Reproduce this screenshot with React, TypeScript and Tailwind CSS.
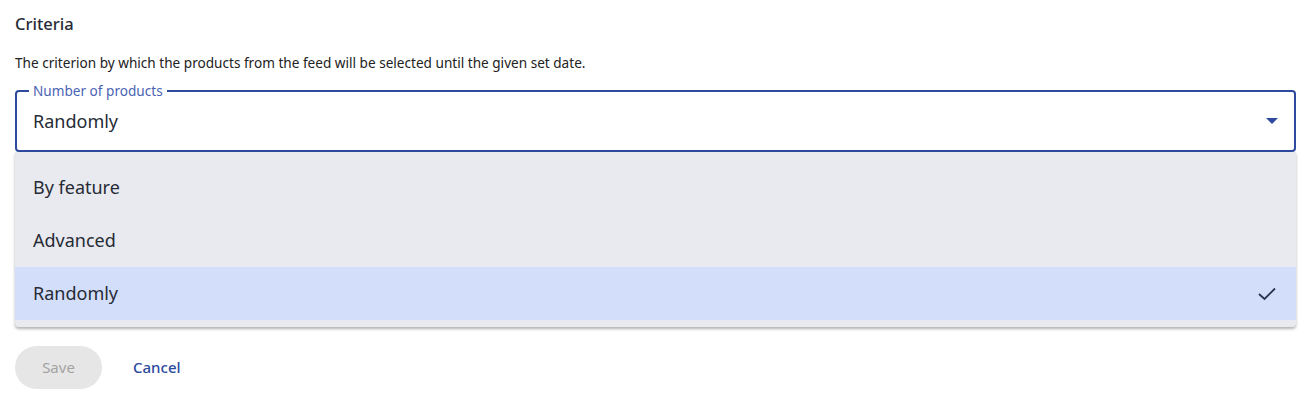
import React from "react";

export default function App() {
  const items = ["By feature", "Advanced", "Randomly"];
  return (
    <div className="w-[1309px] h-[403px] bg-white text-[#262b36] px-[15px] pr-[13px]" style={{ fontFamily: '"Noto Sans", sans-serif' }}>
      <div className="pt-[13px] text-[16.5px] leading-[22px] font-medium">Criteria</div>
      <div className="mt-[19px] text-[13.6px] leading-[18px] text-[#222]">
        The criterion by which the products from the feed will be selected until the given set date.
      </div>
      <fieldset className="mt-[11px] border-2 border-[#2e4a9e] rounded-[4px] pb-[7px] px-[10px]">
        <legend className="px-[4px] text-[13.6px] leading-[16px] text-[#4a63b3] ml-[2px]">Number of products</legend>
        <div className="flex items-center justify-between h-[44px] pl-[6px] pr-[6px]">
          <span className="text-[18px] text-[#262b36]">Randomly</span>
          <svg width="12" height="6" viewBox="0 0 12 6">
            <path d="M0 0 L12 0 L6 6 Z" fill="#2e4a9e" />
          </svg>
        </div>
      </fieldset>
      <div className="bg-[#e9eaef] rounded-b-[4px] pt-[9px] pb-[7px] shadow-[0_2px_3px_rgba(0,0,0,0.3)]">
        {items.map((it) => (
          <div
            key={it}
            className={`h-[53px] flex items-center justify-between pl-[18px] pr-[19px] text-[18px] ${it === "Randomly" ? "bg-[#d3defa]" : ""}`}
          >
            <span>{it}</span>
            {it === "Randomly" && (
              <svg width="20" height="16" viewBox="0 0 20 16" fill="none">
                <path d="M2 8 L7.5 13 L18 2.5" stroke="#2a3350" strokeWidth="1.8" />
              </svg>
            )}
          </div>
        ))}
      </div>
      <div className="mt-[19px] flex items-center gap-[31px]">
        <button className="w-[87px] h-[43px] rounded-full bg-[#e6e6e6] text-[#a3a3a3] text-[15px]">Save</button>
        <button className="text-[#2b4a9e] text-[15px] font-medium">Cancel</button>
      </div>
    </div>
  );
}
